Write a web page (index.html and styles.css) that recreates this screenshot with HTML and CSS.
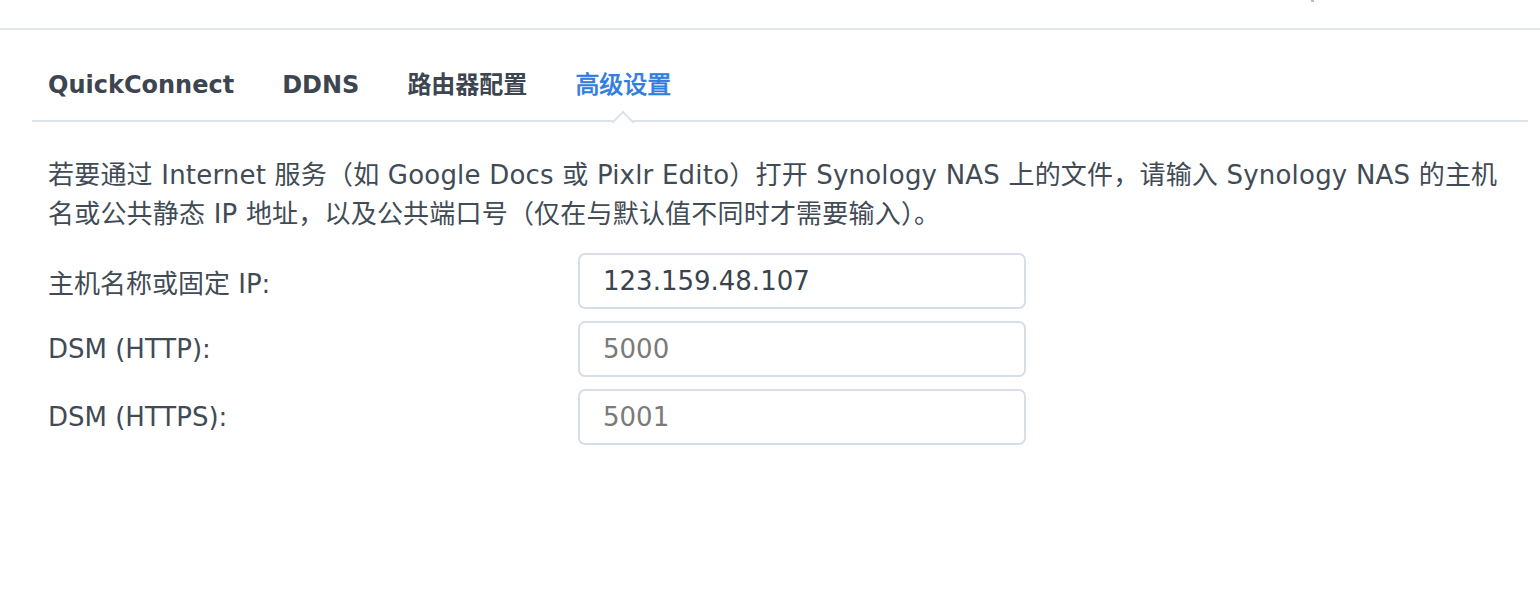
FILE: index.html
```html
<!DOCTYPE html>
<html lang="zh-CN">
<head>
<meta charset="utf-8">
<link rel="stylesheet" href="styles.css">
</head>
<body>
<div class="topbar"><span class="topmark"></span></div>
<div class="panel">
  <nav class="tabs">
    <span class="tab">QuickConnect</span>
    <span class="tab">DDNS</span>
    <span class="tab">路由器配置</span>
    <span class="tab active">高级设置</span>
  </nav>
  <p class="desc">若要通过 Internet 服务（如 Google Docs 或 Pixlr Edito）打开 Synology NAS 上的文件，请输入 Synology NAS 的主机名或公共静态 IP 地址，以及公共端口号（仅在与默认值不同时才需要输入）。</p>
  <div class="form">
    <label class="row">
      <span class="label">主机名称或固定 IP:</span>
      <input class="field" type="text" value="123.159.48.107">
    </label>
    <label class="row">
      <span class="label">DSM (HTTP):</span>
      <input class="field" type="text" placeholder="5000">
    </label>
    <label class="row">
      <span class="label">DSM (HTTPS):</span>
      <input class="field" type="text" placeholder="5001">
    </label>
  </div>
</div>
</body>
</html>
```
FILE: styles.css
```css
html, body {
  margin: 0;
  background: #ffffff;
}
body {
  font-family: "DejaVu Sans", "Noto Sans CJK SC", sans-serif;
  color: #414b55;
  font-size: 26px;
}
.topbar {
  height: 28px;
  border-bottom: 2px solid #e4e8ee;
  display: flex;
  justify-content: flex-end;
  padding-right: 226px;
}
.topmark {
  width: 3px;
  height: 2px;
  background: #b9bcc0;
}
.panel {
  padding: 0 12px 0 32px;
}
.tabs {
  display: flex;
  gap: 48px;
  padding: 40px 16px 0;
  border-bottom: 2px solid #dde2ea;
  font-size: 24px;
}
.tab {
  position: relative;
  font-weight: bold;
  line-height: 30px;
  padding-bottom: 20px;
  color: #3d4550;
}
.tab.active {
  color: #2f7ddf;
  font-weight: normal;
  -webkit-text-stroke: 0.7px #2f7ddf;
}
.tab.active::after {
  content: "";
  position: absolute;
  left: calc(50% - 8px);
  bottom: -10px;
  width: 16px;
  height: 16px;
  background: #ffffff;
  border-top: 2px solid #dde2ea;
  border-left: 2px solid #dde2ea;
  box-sizing: border-box;
  transform: rotate(45deg);
}
.desc {
  margin: 34px 0 0;
  padding: 0 20px 0 16px;
  line-height: 39px;
  letter-spacing: 0.2px;
}
.form {
  margin-top: 19px;
  padding: 0 16px;
  display: flex;
  flex-direction: column;
  gap: 12px;
}
.row {
  display: flex;
  align-items: center;
}
.label {
  width: 530px;
  flex: none;
}
.field {
  width: 448px;
  height: 56px;
  box-sizing: border-box;
  border: 2px solid #d8dee7;
  border-radius: 7px;
  padding: 0 0 0 23px;
  font-family: "DejaVu Sans", "Noto Sans CJK SC", sans-serif;
  font-size: 26px;
  color: #3a434e;
  outline: none;
  background: #fff;
}
.field::placeholder {
  color: #7a7a7a;
}
```
